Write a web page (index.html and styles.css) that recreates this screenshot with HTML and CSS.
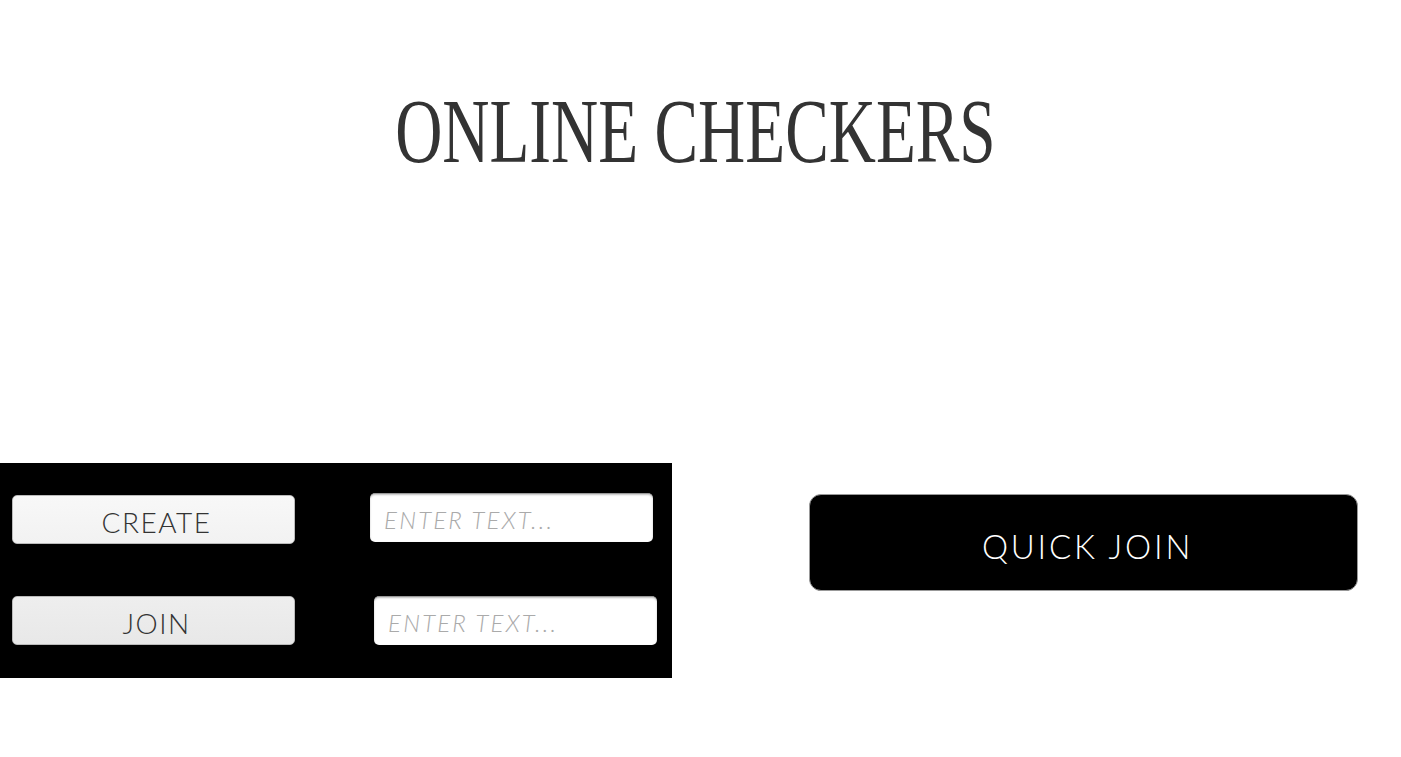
FILE: index.html
```html
<!DOCTYPE html>
<html>
<head>
<meta charset="utf-8">
<link rel="stylesheet" href="styles.css">
</head>
<body>
<h1 class="title">ONLINE CHECKERS</h1>
<div class="bottom">
  <div class="panel">
    <div class="row row-1">
      <button class="btn btn-create">CREATE</button>
      <input class="field field-1" type="text" placeholder="ENTER TEXT...">
    </div>
    <div class="row row-2">
      <button class="btn btn-join">JOIN</button>
      <input class="field field-2" type="text" placeholder="ENTER TEXT...">
    </div>
  </div>
  <button class="quick">QUICK JOIN</button>
</div>
</body>
</html>
```
FILE: styles.css
```css
html, body {
  margin: 0;
  padding: 0;
  background: #fff;
}
body {
  width: 1401px;
  height: 757px;
  overflow: hidden;
  font-family: "Lato", "Liberation Sans", sans-serif;
}
.title {
  margin: 85px 0 0 0;
  font-family: "Liberation Serif", serif;
  font-weight: 400;
  font-size: 92px;
  line-height: 92px;
  color: #333;
  text-align: center;
  transform: scaleX(0.71);
  transform-origin: 683px 0;
  white-space: nowrap;
}
.bottom {
  margin-top: 286px;
  display: flex;
  align-items: flex-start;
}
.panel {
  width: 672px;
  height: 215px;
  background: #000;
  padding-top: 30px;
  box-sizing: border-box;
}
.row {
  display: flex;
  align-items: flex-start;
}
.row-2 {
  margin-top: 52px;
}
.btn {
  width: 283px;
  height: 49px;
  margin-left: 12px;
  border: 1px solid #bbb;
  border-radius: 5px;
  font-family: "Lato", sans-serif;
  font-weight: 300;
  font-size: 28px;
  letter-spacing: 1.5px;
  color: #333;
  padding: 3px 0 0 6px;
  line-height: 47px;
}
.btn-create {
  margin-top: 2px;
  background: linear-gradient(#f8f8f8, #f2f2f2);
}
.btn-join {
  background: linear-gradient(#eeeeee, #e8e8e8);
}
.field {
  width: 283px;
  height: 49px;
  box-sizing: border-box;
  border: none;
  border-top: 1px solid #999;
  border-radius: 5px;
  background: #fff;
  box-shadow: inset 0 1px 2px rgba(0,0,0,0.25);
  padding: 2px 0 0 14px;
  font-family: "Lato", sans-serif;
  font-style: italic;
  font-weight: 300;
  font-size: 24px;
  letter-spacing: 2.2px;
  outline: none;
}
.field::placeholder {
  color: #aaa;
}
.field-1 {
  margin-left: 75px;
}
.field-2 {
  margin-left: 79px;
}
.quick {
  margin: 31px 0 0 137px;
  width: 549px;
  height: 97px;
  background: #000;
  border: 1px solid #999;
  border-radius: 12px;
  color: #fff;
  font-family: "Lato", sans-serif;
  font-weight: 300;
  font-size: 33px;
  letter-spacing: 2.8px;
  padding: 6px 0 0 8px;
}
```
